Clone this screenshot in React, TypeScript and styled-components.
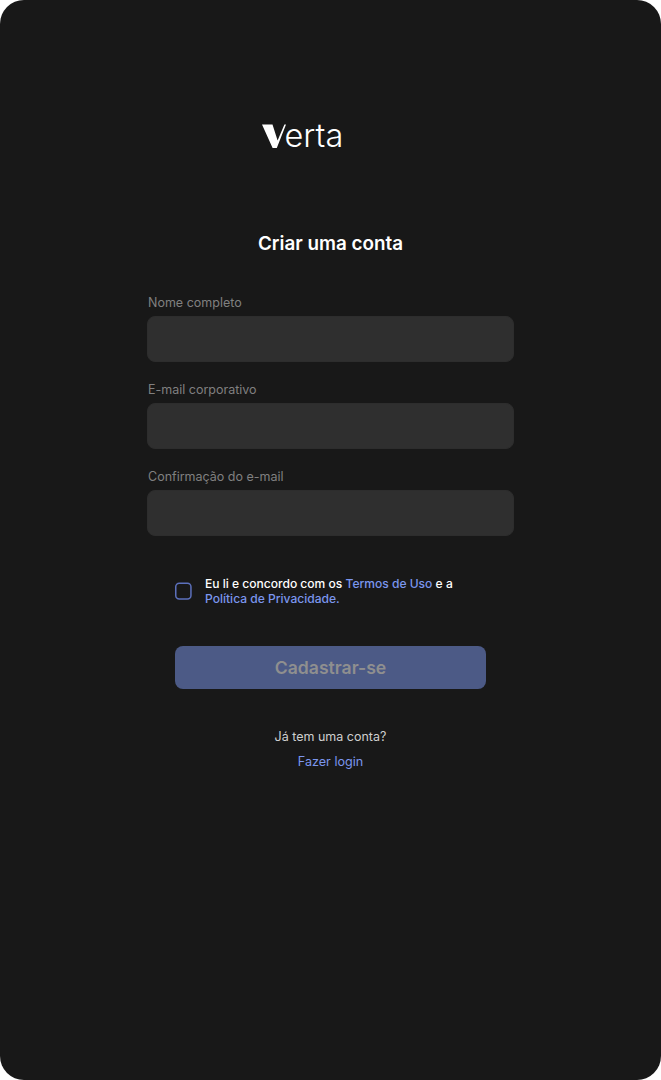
import React from "react";
import styled, { createGlobalStyle } from "styled-components";

const Global = createGlobalStyle`
  html, body { margin: 0; padding: 0; background: #ffffff; }
  * { box-sizing: border-box; }
`;

const Screen = styled.main`
  width: 661px;
  height: 1080px;
  background: #181818;
  border-radius: 24px;
  font-family: Inter, "Liberation Sans", sans-serif;
  display: flex;
  flex-direction: column;
  align-items: center;
  padding-top: 120px;
`;

const Logo = styled.div`
  display: flex;
  align-items: flex-end;
  width: 81px;
  height: 32px;
  margin-right: 57px;
  color: #fff;
`;

const LogoMark = styled.svg`
  width: 24px;
  height: 32px;
  flex: none;
`;

const LogoWord = styled.span`
  font-family: Inter, sans-serif;
  font-weight: 300;
  font-size: 32.5px;
  line-height: 32px;
  margin-left: -1px;
  color: #fff;
`;

const Title = styled.h1`
  margin: 80px 0 0;
  font-size: 18.85px;
  line-height: 24px;
  font-weight: 600;
  color: #fff;
`;

const Form = styled.form`
  width: 367px;
  margin-top: 39px;
  display: flex;
  flex-direction: column;
  gap: 20px;
`;

const Field = styled.label`
  display: flex;
  flex-direction: column;
  gap: 5px;
`;

const FieldLabel = styled.span`
  font-size: 12.5px;
  line-height: 16px;
  color: #808080;
  padding-left: 1px;
`;

const Input = styled.input`
  height: 46px;
  border: 1px solid #2d2d2d;
  border-radius: 8px;
  background: #2f2f2f;
  outline: none;
`;

const Terms = styled.div`
  width: 311px;
  margin-top: 40px;
  display: flex;
  align-items: center;
  gap: 13px;
`;

const CheckBox = styled.svg`
  width: 17px;
  height: 18px;
  flex: none;
`;

const TermsText = styled.p`
  margin: 0;
  font-size: 12.05px;
  line-height: 15px;
  font-weight: 500;
  color: #fff;
`;

const Link = styled.a`
  color: #7b96ee;
`;

const Submit = styled.button`
  width: 311px;
  height: 43px;
  margin-top: 40px;
  border: 0;
  border-radius: 8px;
  background: #4c5a86;
  color: #8f8f8f;
  font-family: inherit;
  font-size: 17.6px;
  font-weight: 600;
`;

const Question = styled.p`
  margin: 40px 0 0;
  font-size: 12.5px;
  line-height: 16px;
  color: #cfcfcf;
`;

const LoginLink = styled(Link)`
  margin-top: 9px;
  font-size: 12.6px;
  line-height: 16px;
`;

export default function App() {
  return (
    <>
      <Global />
      <Screen>
        <Logo aria-label="Verta">
          <LogoMark viewBox="0 0 24 32" aria-hidden="true">
            <path d="M0 4.5H10.5L15.6 20.5L22.4 4.5H24L14.8 28H10.6Z" fill="#fff" />
          </LogoMark>
          <LogoWord>erta</LogoWord>
        </Logo>
        <Title>Criar uma conta</Title>
        <Form>
          <Field>
            <FieldLabel>Nome completo</FieldLabel>
            <Input />
          </Field>
          <Field>
            <FieldLabel>E-mail corporativo</FieldLabel>
            <Input />
          </Field>
          <Field>
            <FieldLabel>Confirmação do e-mail</FieldLabel>
            <Input />
          </Field>
        </Form>
        <Terms>
          <CheckBox viewBox="0 0 17 18" aria-hidden="true">
            <rect x="0.75" y="1.25" width="15.2" height="15.8" rx="3.5" fill="none" stroke="#5c70bc" strokeWidth="1.5" />
          </CheckBox>
          <TermsText>
            Eu li e concordo com os <Link>Termos de Uso</Link> e a
            <br />
            <Link>Política de Privacidade.</Link>
          </TermsText>
        </Terms>
        <Submit type="button">Cadastrar-se</Submit>
        <Question>Já tem uma conta?</Question>
        <LoginLink>Fazer login</LoginLink>
      </Screen>
    </>
  );
}
